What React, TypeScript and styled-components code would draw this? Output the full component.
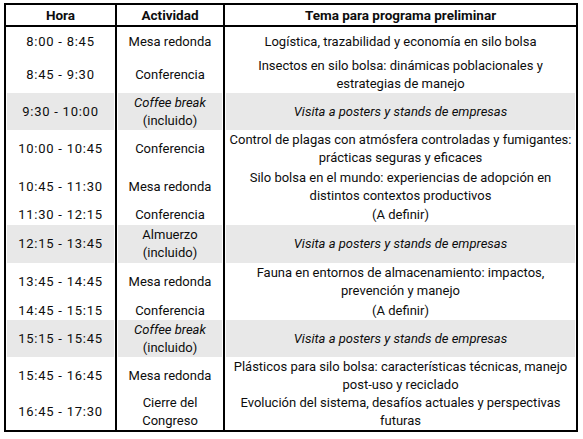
import React from "react";
import styled, { createGlobalStyle } from "styled-components";

const GlobalStyle = createGlobalStyle`
  * {
    box-sizing: border-box;
  }
  body {
    margin: 0;
    background: #ffffff;
    font-family: Roboto, "Liberation Sans", sans-serif;
    color: #0d0d0d;
  }
`;

const Page = styled.div`
  padding: 3px 0 0 4px;
`;

const Table = styled.table`
  width: 574px;
  table-layout: fixed;
  border-collapse: separate;
  border-spacing: 0;
  border: 2px solid #000;
  font-size: 13px;
  line-height: 18px;
`;

const Row = styled.tr<{ $h: number }>`
  height: ${(p) => p.$h}px;
`;

const HeadCell = styled.th<{ $first?: boolean }>`
  height: 22px;
  padding: 0;
  font-size: 13.5px;
  font-weight: 700;
  text-align: center;
  vertical-align: middle;
  border-bottom: 2px solid #000;
  border-left: ${(p) => (p.$first ? "none" : "2px solid #000")};
`;

const Cell = styled.td<{ $first?: boolean; $shade?: boolean; $italic?: boolean }>`
  padding: 0 2px;
  text-align: center;
  vertical-align: middle;
  border-left: ${(p) => (p.$first ? "none" : "2px solid #000")};
  background: ${(p) => (p.$shade ? "#e8e8e8" : "transparent")};
  box-shadow: ${(p) =>
    p.$shade ? "inset 1px 0 0 #fff, inset -1px 0 0 #fff" : "none"};
  font-style: ${(p) => (p.$italic ? "italic" : "normal")};
  letter-spacing: ${(p) => (p.$first ? "0.75px" : "normal")};
  white-space: nowrap;
`;

const Em = styled.span`
  font-style: italic;
`;

type Item = {
  time: string;
  act: React.ReactNode;
  topic: string[];
  h: number;
  shade?: boolean;
};

const coffee = (
  <>
    <Em>Coffee break</Em>
    <br />
    (incluido)
  </>
);

const visit = ["Visita a posters y stands de empresas"];

const rows: Item[] = [
  { time: "8:00 - 8:45", act: "Mesa redonda", topic: ["Logística, trazabilidad y economía en silo bolsa"], h: 30 },
  { time: "8:45 - 9:30", act: "Conferencia", topic: ["Insectos en silo bolsa: dinámicas poblacionales y", "estrategias de manejo"], h: 36 },
  { time: "9:30 - 10:00", act: coffee, topic: visit, h: 37, shade: true },
  { time: "10:00 - 10:45", act: "Conferencia", topic: ["Control de plagas con atmósfera controladas y fumigantes:", "prácticas seguras y eficaces"], h: 38 },
  { time: "10:45 - 11:30", act: "Mesa redonda", topic: ["Silo bolsa en el mundo: experiencias de adopción en", "distintos contextos productivos"], h: 37 },
  { time: "11:30 - 12:15", act: "Conferencia", topic: ["(A definir)"], h: 20 },
  { time: "12:15 - 13:45", act: <>Almuerzo<br />(incluido)</>, topic: visit, h: 38, shade: true },
  { time: "13:45 - 14:45", act: "Mesa redonda", topic: ["Fauna en entornos de almacenamiento: impactos,", "prevención y manejo"], h: 38 },
  { time: "14:45 - 15:15", act: "Conferencia", topic: ["(A definir)"], h: 19 },
  { time: "15:15 - 15:45", act: coffee, topic: visit, h: 37, shade: true },
  { time: "15:45 - 16:45", act: "Mesa redonda", topic: ["Plásticos para silo bolsa: características técnicas, manejo", "post-uso y reciclado"], h: 37 },
  { time: "16:45 - 17:30", act: <>Cierre del<br />Congreso</>, topic: ["Evolución del sistema, desafíos actuales y perspectivas", "futuras"], h: 36 },
];

export default function App() {
  return (
    <>
      <GlobalStyle />
      <Page>
        <Table>
          <colgroup>
            <col style={{ width: 109 }} />
            <col style={{ width: 108 }} />
            <col style={{ width: 353 }} />
          </colgroup>
          <thead>
            <tr>
              <HeadCell $first>Hora</HeadCell>
              <HeadCell>Actividad</HeadCell>
              <HeadCell>Tema para programa preliminar</HeadCell>
            </tr>
          </thead>
          <tbody>
            {rows.map((r) => (
              <Row key={r.time} $h={r.h}>
                <Cell $first $shade={r.shade}>
                  {r.time}
                </Cell>
                <Cell $shade={r.shade}>{r.act}</Cell>
                <Cell $shade={r.shade} $italic={r.shade}>
                  {r.topic.map((line, i) => (
                    <React.Fragment key={i}>
                      {i > 0 && <br />}
                      {line}
                    </React.Fragment>
                  ))}
                </Cell>
              </Row>
            ))}
          </tbody>
        </Table>
      </Page>
    </>
  );
}
